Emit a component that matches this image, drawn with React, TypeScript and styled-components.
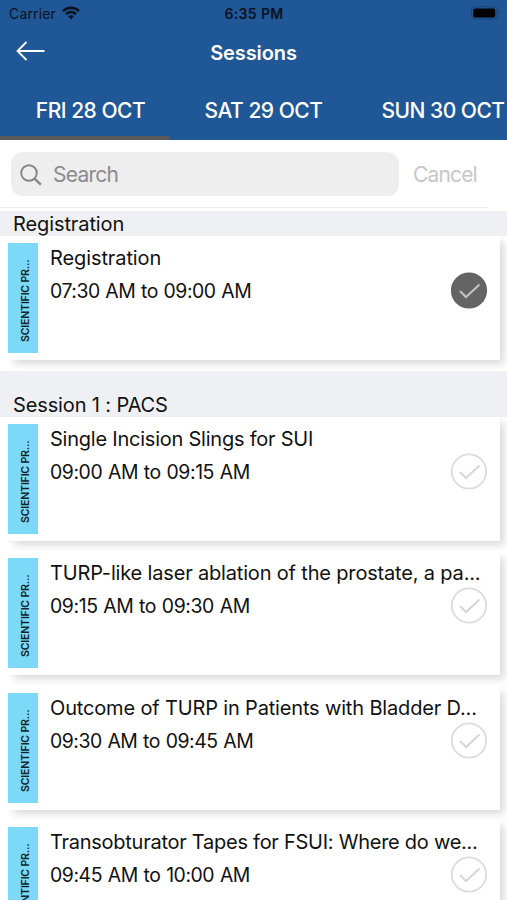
import React from "react";
import styled, { createGlobalStyle } from "styled-components";

const GlobalStyle = createGlobalStyle`
  *, *::before, *::after { box-sizing: border-box; }
  body {
    margin: 0;
    background: #fff;
    overflow: hidden;
    font-family: Inter, "Liberation Sans", sans-serif;
    color: #111;
  }
`;

const Screen = styled.div`
  width: 507px;
  height: 900px;
  overflow: hidden;
  display: flex;
  flex-direction: column;
  background: #fff;
`;

const Text = styled.span<{ $track?: number }>`
  display: block;
  white-space: nowrap;
  letter-spacing: ${(p) => p.$track ?? 0}px;
`;

const Header = styled.header`
  flex: none;
  height: 140px;
  background: #205796;
  display: flex;
  flex-direction: column;
`;

const StatusBar = styled.div`
  height: 28px;
  display: grid;
  grid-template-columns: 1fr auto 1fr;
  align-items: center;
  padding: 0 6px 2px 9px;
  color: #08131f;
`;

const Carrier = styled.div`
  display: flex;
  align-items: center;
  gap: 6px;
  font-size: 14px;
`;

const Clock = styled(Text)`
  font-size: 14px;
  font-weight: 600;
  margin-right: 2px;
`;

const BatteryIcon = styled.svg`
  justify-self: end;
  margin-right: -1px;
`;

const NavBar = styled.div`
  height: 48px;
  display: grid;
  grid-template-columns: 1fr auto 1fr;
  align-items: center;
  padding: 0 16px;
  color: #fff;
`;

const BackIcon = styled.svg`
  margin-bottom: 2px;
`;

const Title = styled(Text)`
  font-size: 20px;
  font-weight: 600;
  padding-top: 1px;
`;

const Tabs = styled.nav`
  flex: 1;
  display: flex;
`;

const Tab = styled.div<{ $width: number; $active?: boolean }>`
  flex: none;
  width: ${(p) => p.$width}px;
  height: 64px;
  display: flex;
  justify-content: center;
  padding: 22px 0 0 11px;
  color: #fff;
  font-size: 21px;
  line-height: 26px;
  font-weight: 500;
  border-bottom: 4px solid ${(p) => (p.$active ? "#5b5a5b" : "transparent")};
`;

const SearchBar = styled.div`
  flex: none;
  height: 68px;
  margin-right: 19px;
  border-bottom: 1px solid #f0f0f1;
  display: flex;
  align-items: center;
  padding: 1px 0 0 11px;
`;

const SearchField = styled.div`
  width: 388px;
  height: 44px;
  border-radius: 12px;
  background: #eeeeee;
  color: #8b8b90;
  display: flex;
  align-items: center;
  gap: 11px;
  padding: 1px 0 0 9px;
  font-size: 21px;
`;

const Cancel = styled(Text)`
  margin-left: 14px;
  font-size: 21px;
  color: #c7c7c8;
`;

const SectionHeader = styled.h2<{ $height: number }>`
  flex: none;
  height: ${(p) => p.$height}px;
  margin: 0;
  padding: 0 13px;
  display: flex;
  align-items: flex-end;
  background: #eff0f4;
  font-size: 20px;
  line-height: 24px;
  font-weight: 400;
`;

const SessionList = styled.main`
  padding-top: 3px;
  display: flex;
  flex-direction: column;
`;

const Row = styled.div`
  flex: none;
  height: 134.5px;
  padding: 0 7px 0 8px;
  overflow: hidden;
`;

const Card = styled.article`
  height: 124px;
  background: #fff;
  box-shadow: 5px 5px 8px -1px rgba(0, 0, 0, 0.15);
  display: grid;
  grid-template-columns: 30px 1fr 36px;
  column-gap: 12px;
  padding-right: 13px;
`;

const Category = styled.div`
  height: 110px;
  margin-top: 7px;
  background: #7cd9f8;
  display: flex;
  align-items: center;
  justify-content: center;
  padding-right: 6px;
  writing-mode: vertical-rl;
  transform: rotate(180deg);
`;

const CategoryText = styled(Text)`
  font-size: 10.6px;
  line-height: 12px;
  font-weight: 600;
  color: #10232b;
  margin-top: -5px;
`;

const Details = styled.div`
  min-width: 0;
  padding-top: 6px;
  font-size: 20px;
  line-height: 33px;
`;

const DetailTitle = styled(Text)`
  height: 33px;
  line-height: 33px;
`;

const DetailTime = styled(Text)`
  font-size: 19.4px;
  word-spacing: 0.7px;
`;

const Check = styled.svg`
  margin-top: 36px;
`;

type Line = { text: string; track: number };
type Session = { title: Line; time: Line; selected?: boolean };

const registration: Session[] = [
  {
    title: { text: "Registration", track: -0.1 },
    time: { text: "07:30 AM to 09:00 AM", track: -0.46 },
    selected: true,
  },
];

const pacs: Session[] = [
  {
    title: { text: "Single Incision Slings for SUI", track: -0.23 },
    time: { text: "09:00 AM to 09:15 AM", track: -0.41 },
  },
  {
    title: { text: "TURP-like laser ablation of the prostate, a pa...", track: -0.17 },
    time: { text: "09:15 AM to 09:30 AM", track: -0.4 },
  },
  {
    title: { text: "Outcome of TURP in Patients with Bladder D...", track: -0.16 },
    time: { text: "09:30 AM to 09:45 AM", track: -0.46 },
  },
  {
    title: { text: "Transobturator Tapes for FSUI: Where do we...", track: -0.26 },
    time: { text: "09:45 AM to 10:00 AM", track: -0.43 },
  },
];

function SessionRow({ title, time, selected }: Session) {
  return (
    <Row>
      <Card>
        <Category>
          <CategoryText $track={-0.2}>SCIENTIFIC PR...</CategoryText>
        </Category>
        <Details>
          <DetailTitle $track={title.track}>{title.text}</DetailTitle>
          <DetailTime $track={time.track}>{time.text}</DetailTime>
        </Details>
        <Check width="37" height="37" viewBox="0 0 37 37" fill="none">
          <circle
            cx="18"
            cy="18.5"
            r="17.2"
            fill={selected ? "#646464" : "none"}
            stroke={selected ? "#646464" : "#dcdcdc"}
            strokeWidth="1.8"
          />
          <path
            d="M9 19 L15 25 L28.5 12.5"
            stroke={selected ? "#c4c4c4" : "#d6d6d6"}
            strokeWidth="2"
          />
        </Check>
      </Card>
    </Row>
  );
}

export default function App() {
  return (
    <Screen>
      <GlobalStyle />
      <Header>
        <StatusBar>
          <Carrier>
            <Text $track={0.15}>Carrier</Text>
            <svg width="18" height="14" viewBox="0 0 19 14" fill="none" stroke="#08131f">
              <path d="M1 5 C6 0.2 13 0.2 18 5" strokeWidth="2.5" />
              <path d="M4.2 8.2 C7.2 5.2 11.8 5.2 14.8 8.2" strokeWidth="2.4" />
              <path d="M9.5 13.5 L6.5 10.5 C8.2 8.9 10.8 8.9 12.5 10.5 Z" fill="#08131f" stroke="none" />
            </svg>
          </Carrier>
          <Clock $track={0.35}>6:35 PM</Clock>
          <BatteryIcon width="31" height="14" viewBox="0 0 31 14">
            <rect x="0.5" y="0.7" width="25.5" height="12.6" rx="3.8" fill="none" stroke="#1a4579" />
            <rect x="2.2" y="2.4" width="22" height="9.2" rx="2.2" fill="#000" />
            <path d="M27.5 5.3 Q29.5 7 27.5 8.7 Z" fill="#1a4579" />
          </BatteryIcon>
        </StatusBar>
        <NavBar>
          <BackIcon width="29" height="20" viewBox="0 0 29 20" fill="none" stroke="#fff" strokeWidth="1.8">
            <path d="M28.5 10 H1.5 M10.5 1 L1.5 10 L10.5 19" />
          </BackIcon>
          <Title $track={-0.1}>Sessions</Title>
        </NavBar>
        <Tabs>
          <Tab $width={170} $active>
            <Text $track={-0.5}>FRI 28 OCT</Text>
          </Tab>
          <Tab $width={176}>
            <Text $track={-0.5}>SAT 29 OCT</Text>
          </Tab>
          <Tab $width={183}>
            <Text $track={-0.5}>SUN 30 OCT</Text>
          </Tab>
        </Tabs>
      </Header>
      <SearchBar>
        <SearchField>
          <svg width="22" height="22" viewBox="0 0 22 22" fill="none" stroke="#85858a" strokeWidth="1.9">
            <circle cx="9" cy="9" r="7.8" />
            <path d="M14.6 14.6 L20.8 20.6" strokeWidth="2.3" />
          </svg>
          <Text $track={-0.75}>Search</Text>
        </SearchField>
        <Cancel $track={-0.85}>Cancel</Cancel>
      </SearchBar>
      <SessionList>
        <SectionHeader $height={25}>
          <Text $track={-0.1}>Registration</Text>
        </SectionHeader>
        {registration.map((s) => (
          <SessionRow key={s.time.text} {...s} />
        ))}
        <SectionHeader $height={46}>
          <Text $track={-0.13}>Session 1 : PACS</Text>
        </SectionHeader>
        {pacs.map((s) => (
          <SessionRow key={s.time.text} {...s} />
        ))}
      </SessionList>
    </Screen>
  );
}
